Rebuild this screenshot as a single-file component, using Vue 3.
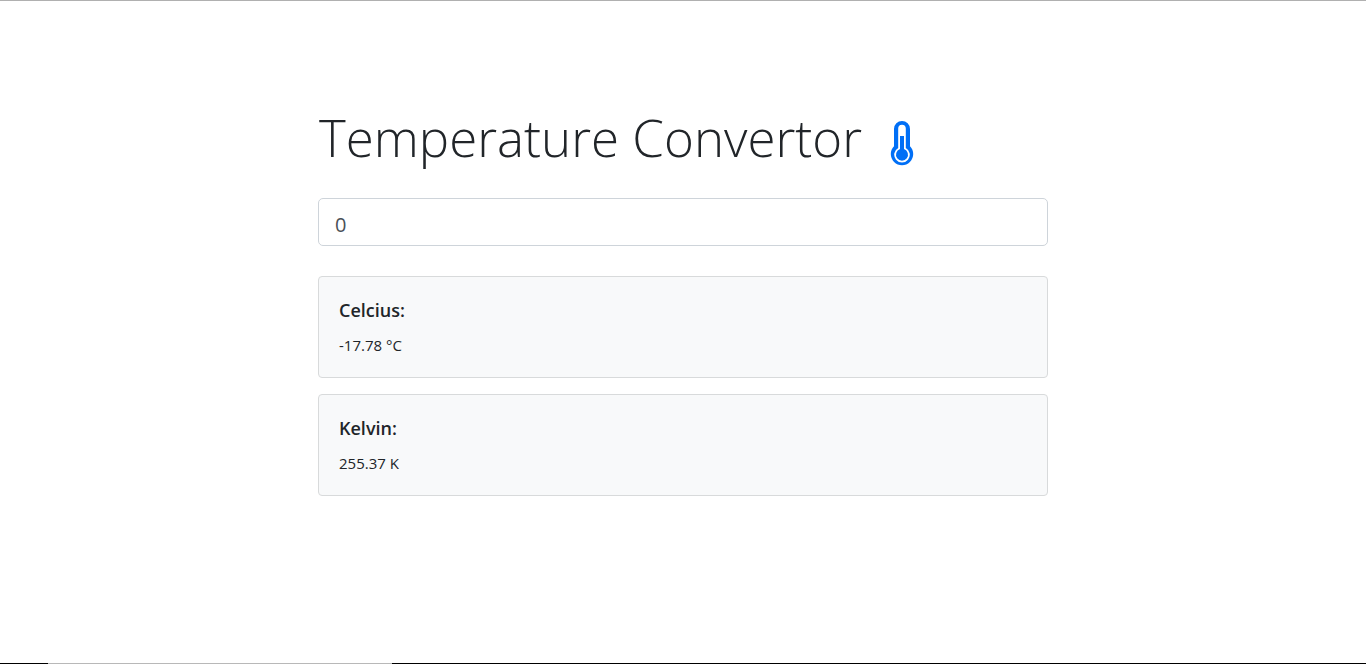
<script setup>
import { computed, ref } from 'vue'

const fahrenheit = ref('0')

const results = computed(() => {
  const celsius = ((Number(fahrenheit.value) - 32) * 5) / 9
  return [
    { label: 'Celcius:', value: `${celsius.toFixed(2)} °C` },
    { label: 'Kelvin:', value: `${(celsius + 273.15).toFixed(2)} K` }
  ]
})
</script>

<template>
  <div class="page">
    <main class="container">
      <h1 class="title">
        <span>Temperature Convertor</span>
        <svg class="thermometer" viewBox="0 0 24 46" aria-hidden="true">
          <path class="shell" d="M12 1a8 8 0 0 1 8 8v17.2a11.2 11.2 0 1 1-16 0V9a8 8 0 0 1 8-8Z" />
          <path class="glass" d="M12 4.7a3.8 3.8 0 0 1 3.8 3.8v19.4a7.8 7.8 0 1 1-7.6 0V8.5a3.8 3.8 0 0 1 3.8-3.8Z" />
          <path class="shell" d="M10 16h4v13.1a6 6 0 1 1-4 0Z" />
        </svg>
      </h1>
      <input v-model="fahrenheit" class="field" type="text" inputmode="decimal" aria-label="Temperature in Fahrenheit" />
      <section v-for="item in results" :key="item.label" class="card">
        <h2 class="label">{{ item.label }}</h2>
        <p class="value">{{ item.value }}</p>
      </section>
    </main>
    <footer class="edge"><span class="edge-light"></span></footer>
  </div>
</template>

<style>
body {
  background: #fff;
}
</style>

<style scoped>
.page {
  box-sizing: border-box;
  display: flex;
  flex-direction: column;
  min-height: 100vh;
  border-top: 1px solid #b0b0b0;
  color: #212529;
  font-family: "Segoe UI", "Open Sans", "Noto Sans", sans-serif;
}

.container {
  box-sizing: border-box;
  width: 100%;
  max-width: 762px;
  flex: 1;
  margin: 0 auto;
  padding: 102px 16px 32px;
}

.title {
  display: flex;
  align-items: center;
  gap: 28px;
  margin: 0 0 27px;
  padding-left: 1px;
  font-size: 51px;
  font-weight: 300;
  line-height: 68px;
}

.thermometer {
  width: 24px;
  height: 46px;
  margin-top: 12px;
}

.shell {
  fill: #006ff6;
}

.glass {
  fill: #fff;
}

.field {
  display: block;
  box-sizing: border-box;
  width: 100%;
  height: 48px;
  margin: 0 0 30px;
  padding: 10px 16px 6px;
  border: 1px solid #ced4da;
  border-radius: 5px;
  outline: none;
  background: #fff;
  color: #495057;
  font-family: inherit;
  font-size: 20px;
  line-height: 30px;
}

.card {
  box-sizing: border-box;
  min-height: 102px;
  margin-bottom: 16px;
  padding: 21px 20px 20px;
  border: 1px solid #d8dadb;
  border-radius: 4px;
  background: #f8f9fa;
}

.label {
  margin: 0 0 11px;
  font-size: 18px;
  font-weight: 600;
  line-height: 24px;
}

.value {
  margin: 0;
  font-size: 15px;
  line-height: 24px;
}

.edge {
  height: 1px;
  background: #000;
}

.edge-light {
  display: block;
  width: 344px;
  height: 1px;
  margin-left: 48px;
  background: #b8b8b8;
}
</style>
